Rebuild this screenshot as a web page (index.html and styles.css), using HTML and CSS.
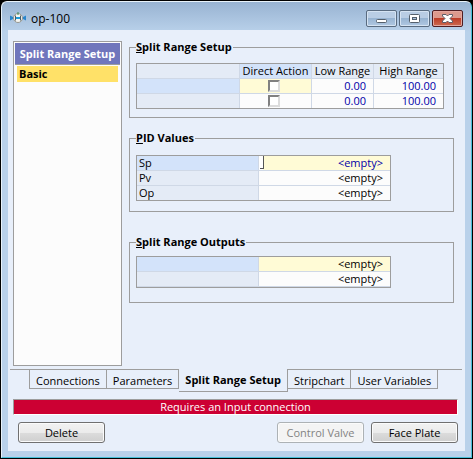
FILE: index.html
```html
<!DOCTYPE html>
<html lang="en">
<head>
<meta charset="utf-8">
<title>op-100</title>
<link rel="stylesheet" href="styles.css">
</head>
<body>
<div class="window">
  <header class="titlebar">
    <svg class="app-icon" viewBox="0 0 16 12" aria-hidden="true">
      <path d="M0 3.500l5 2.500-5 2.500zM16 3.500l-5 2.500 5 2.500z" fill="#2a86cc"/>
      <circle cx="8" cy="6" r="4.500" fill="#f6f6f2" stroke="#96968f"/>
      <path d="M8 0v3" stroke="#3f8a58"/>
      <path d="M5.500 3.500v5M10.500 3.500v5" stroke="#4a5c66"/>
      <path d="M6 5h4v2H6z" fill="#1f9bd8"/>
    </svg>
    <h1 class="title">op-100</h1>
    <div class="controls">
      <button class="control" type="button" aria-label="Minimize">
        <svg viewBox="0 0 30 16"><rect x="9.500" y="8.500" width="10" height="3" rx="1" fill="#fff" stroke="#55606c"/></svg>
      </button>
      <button class="control" type="button" aria-label="Maximize">
        <svg viewBox="0 0 30 16"><rect x="9.500" y="3.500" width="10" height="8" rx="1" fill="#fff" stroke="#55606c"/><rect x="12.500" y="6.500" width="4" height="2" fill="#a8c2de" stroke="#55606c"/></svg>
      </button>
      <button class="control close" type="button" aria-label="Close">
        <svg viewBox="0 0 30 16"><path d="M9.500 3.500h3.500l1.500 1.500 1.500-1.500h3.500v1.500l-2.500 2.500 2.500 2.500v1.500H16l-1.500-1.500-1.500 1.500H9.500V10L12 7.500 9.500 5z" fill="#fff" stroke="#5c5c68"/></svg>
      </button>
    </div>
  </header>
  <main class="client">
    <div class="page">
      <nav class="sidebar">
        <h2 class="sidebar-head">Split Range Setup</h2>
        <button class="sidebar-item" type="button">Basic</button>
      </nav>
      <div class="groups">
        <fieldset class="group">
          <legend><u>S</u>plit Range Setup</legend>
          <table class="grid setup">
            <colgroup><col class="c-name"><col class="c-action"><col class="c-low"><col class="c-high"></colgroup>
            <thead>
              <tr><th></th><th class="current">Direct Action</th><th>Low Range</th><th>High Range</th></tr>
            </thead>
            <tbody>
              <tr><th class="current"></th><td class="check active"><input type="checkbox" aria-label="Direct action 1"></td><td class="entry">0.00</td><td class="entry">100.00</td></tr>
              <tr><th></th><td class="check"><input type="checkbox" aria-label="Direct action 2"></td><td class="entry">0.00</td><td class="entry">100.00</td></tr>
            </tbody>
          </table>
        </fieldset>
        <fieldset class="group values">
          <legend><u>P</u>ID Values</legend>
          <table class="grid pairs">
            <colgroup><col class="c-label"><col class="c-value"></colgroup>
            <tbody>
              <tr><th class="current">Sp</th><td class="active entry caret">&lt;empty&gt;</td></tr>
              <tr><th>Pv</th><td>&lt;empty&gt;</td></tr>
              <tr><th>Op</th><td>&lt;empty&gt;</td></tr>
            </tbody>
          </table>
        </fieldset>
        <fieldset class="group outputs">
          <legend><u>S</u>plit Range Outputs</legend>
          <table class="grid pairs">
            <colgroup><col class="c-label"><col class="c-value"></colgroup>
            <tbody>
              <tr><th class="current"></th><td class="active">&lt;empty&gt;</td></tr>
              <tr><th></th><td>&lt;empty&gt;</td></tr>
            </tbody>
          </table>
        </fieldset>
      </div>
    </div>
    <div class="tabs" role="tablist">
      <button class="tab" type="button" role="tab">Connections</button>
      <button class="tab" type="button" role="tab">Parameters</button>
      <button class="tab selected" type="button" role="tab" aria-selected="true">Split Range Setup</button>
      <button class="tab" type="button" role="tab">Stripchart</button>
      <button class="tab" type="button" role="tab">User Variables</button>
    </div>
    <div class="status" role="status">Requires an Input connection</div>
    <footer class="actions">
      <button class="push" type="button">Delete</button>
      <button class="push last-group" type="button" disabled>Control Valve</button>
      <button class="push" type="button">Face Plate</button>
    </footer>
  </main>
</div>
</body>
</html>
```
FILE: styles.css
```css
* { box-sizing: border-box; }

body {
  margin: 0;
  min-height: 100vh;
  display: flex;
  background: #000;
  color: #000;
  font: 11px/14px "Open Sans", "Noto Sans", sans-serif;
}

button {
  font: inherit;
  color: inherit;
  margin: 0;
  padding: 0;
}

.window {
  flex: 1;
  display: flex;
  flex-direction: column;
  margin: 1px;
  padding: 0 6px 6px;
  border: 1px solid #47bfd8;
  border-top-color: #e8f2fa;
  border-left-color: #e8f2fa;
  border-radius: 6px 6px 0 0;
  background: linear-gradient(#98b3d2, #b9d1ea 30px, #b9d1ea);
}

.titlebar {
  display: flex;
  height: 28px;
  padding: 0 2px;
}

.app-icon {
  width: 16px;
  height: 12px;
  margin-top: 10px;
}

.title {
  flex: 1;
  margin: 9px 0 0 5px;
  font-size: 12px;
  line-height: 16px;
  font-weight: 400;
}

.controls {
  display: flex;
  gap: 2px;
  margin-top: 8px;
}

.control {
  width: 31px;
  height: 17px;
  border: 1px solid #596b80;
  border-radius: 2px;
  box-shadow: inset 0 0 0 1px #d5e3f2;
  background: linear-gradient(#b9cde4 50%, #98b4d2 50%, #b0c8e2);
}

.control svg {
  display: block;
  width: 30px;
  height: 16px;
}

.close {
  border-color: #4f1d22;
  box-shadow: inset 0 0 0 1px #e3a79f;
  background: linear-gradient(#dc998d 45%, #bd3d28 50%, #cc6a50);
}

.client {
  flex: 1;
  display: flex;
  flex-direction: column;
  padding: 11px 7px 8px 5px;
  background: #e8effa;
}

.page {
  flex: 1;
  display: flex;
  gap: 7px;
  padding-right: 4px;
}

.sidebar {
  flex: 0 0 109px;
  padding: 1px;
  border: 1px solid #9d9d9d;
  background: #fcfcfc;
}

.sidebar-head {
  margin: 0;
  padding-top: 1px;
  border-bottom: 1px solid #9d9d9d;
  background: #7076bc;
  color: #fff;
  font-size: 11px;
  line-height: 20px;
  text-align: center;
  white-space: nowrap;
}

.sidebar-item {
  display: block;
  width: calc(100% - 4px);
  height: 16px;
  margin: 1px 2px;
  padding: 0 2px;
  border: 0;
  background: #ffe168;
  font-weight: 700;
  text-align: left;
}

.groups {
  flex: 1;
  display: flex;
  flex-direction: column;
  gap: 14px;
}

.group {
  min-width: 0;
  margin: 0;
  padding: 10px 6px 8px;
  border: 1px solid #9d9d9d;
}

.group.values { padding: 11px 6px 10px; }

.group.outputs {
  margin-top: 10px;
  padding: 8px 6px 14px;
}

.group legend {
  padding: 0 1px 0 0;
  font-weight: 700;
  line-height: 12px;
}

.grid {
  table-layout: fixed;
  border: 1px solid #9d9d9d;
  border-collapse: separate;
  border-spacing: 0;
  background: #fcfcfc;
}

.setup { width: 308px; }
.pairs { width: 255px; }
.c-name { width: 103px; }
.c-action { width: 72px; }
.c-low { width: 62px; }
.c-label { width: 122px; }

.grid th,
.grid td {
  height: 15px;
  padding: 0;
  border: 0 solid #cfd8e6;
  border-right-width: 1px;
  border-bottom-width: 1px;
  line-height: 14px;
  white-space: nowrap;
}

.grid th {
  background: #e4ebf6;
  font-weight: 400;
}

.grid td {
  padding-right: 7px;
  text-align: right;
}

.grid :is(th, td):last-child { border-right-width: 0; }
.grid tbody tr:last-child > * { height: 14px; border-bottom-width: 0; }
.outputs .grid tbody tr:last-child > * { height: 15px; border-bottom-width: 1px; }

.grid tbody th { padding-left: 2px; text-align: left; }
.grid th.current { background: #d3e3fa; }
.grid td.active { background: #fffbd6; }
.grid td.entry { color: #0000a8; }

.grid td.check {
  padding: 0;
  text-align: center;
}

.check input {
  appearance: none;
  display: block;
  width: 12px;
  height: 12px;
  margin: 0 28px;
  border: 2px solid #dcdcdc;
  border-top-color: #808080;
  border-left-color: #808080;
  background: #fff;
}

.grid td.caret {
  background: linear-gradient(#555, #555) 4px 0 / 1px 13px no-repeat,
    linear-gradient(#555, #555) 1px 12px / 3px 1px no-repeat,
    linear-gradient(#fff, #fff) 0 0 / 4px 14px no-repeat,
    #fffbd6;
}

.tabs {
  display: flex;
  align-items: flex-start;
  height: 23px;
  margin: 3px -4px 0 -3px;
  padding-left: 19px;
  border-top: 1px solid #9d9d9d;
}

.tab {
  height: 19px;
  padding: 0 6px;
  border: 1px solid #9d9d9d;
  border-top: 0;
  border-left: 0;
  background: #e8effa;
  line-height: 22px;
  white-space: nowrap;
}

.tab:first-child { border-left: 1px solid #9d9d9d; }

.tab.selected {
  height: 23px;
  margin-top: -1px;
  font-weight: 700;
}

.status {
  margin-top: 7px;
  border: 1px solid #9d9d9d;
  border-right-color: #fff;
  border-bottom-color: #fff;
  background: #cc0033;
  color: #fff;
  text-align: center;
}

.actions {
  display: flex;
  gap: 7px;
  margin-top: 7px;
  padding-left: 5px;
}

.push {
  width: 87px;
  height: 21px;
  border: 1px solid #707070;
  border-radius: 3px;
  box-shadow: inset 0 0 0 1px #fbfbfb;
  background: linear-gradient(#f2f2f2, #ebebeb 50%, #dcdcdc 50%, #cfcfcf);
}

.push:disabled {
  border-color: #adb2b5;
  background: #f4f4f4;
  color: #838383;
}

.last-group { margin-left: auto; }
```
